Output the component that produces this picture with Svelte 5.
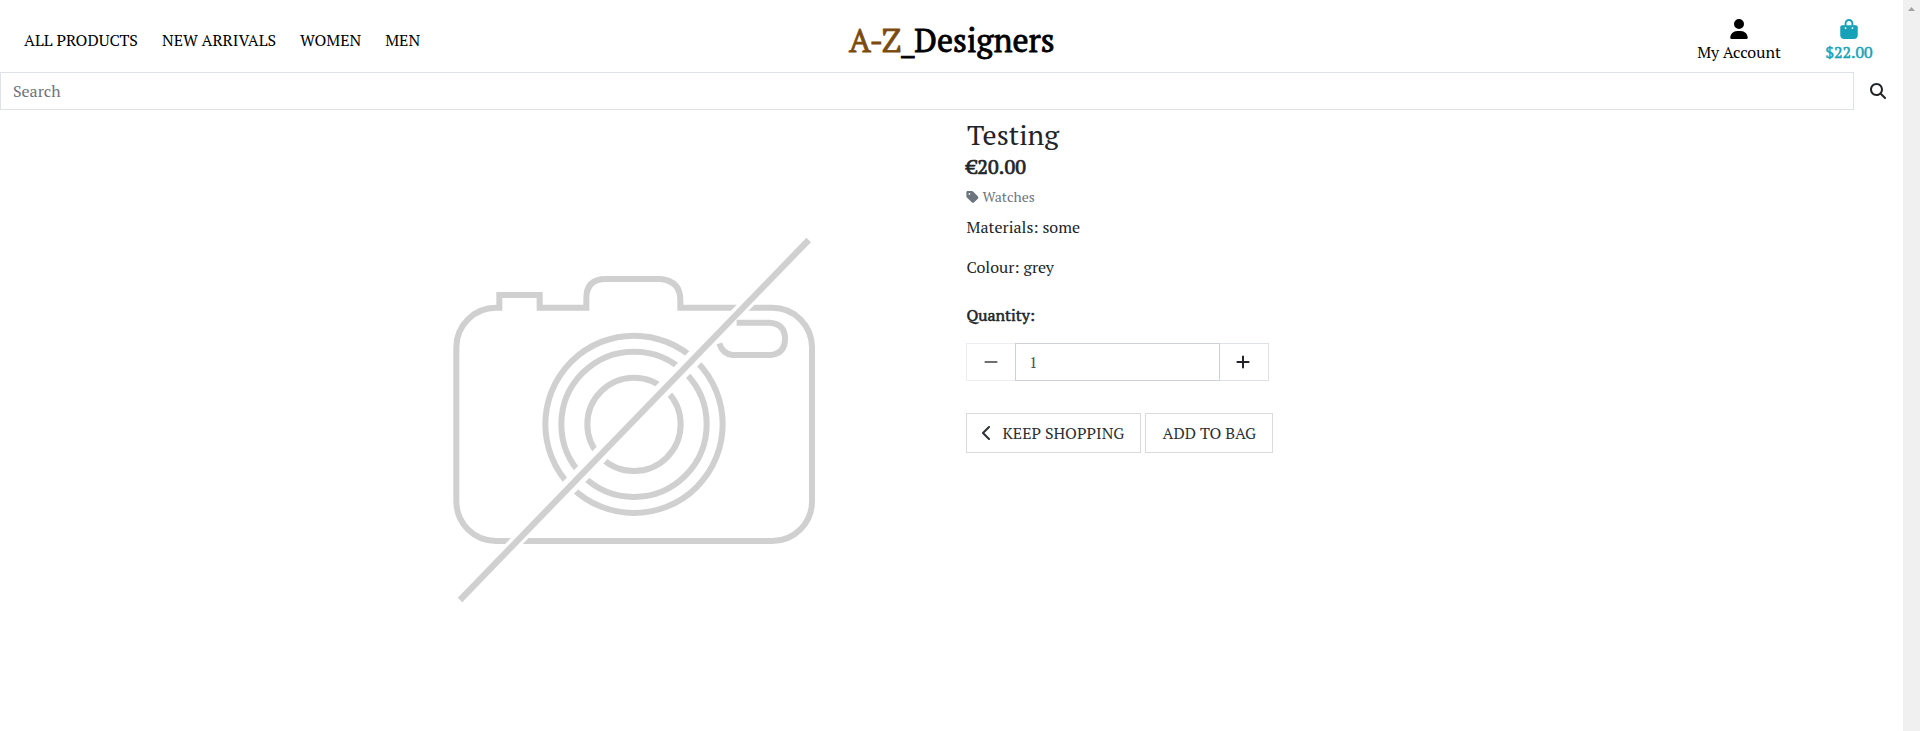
<script>
  const links = ['ALL PRODUCTS', 'NEW ARRIVALS', 'WOMEN', 'MEN'];
  let quantity = $state(1);
</script>

<div class="page">
  <div class="content">
    <header>
      <nav>
        {#each links as link}
          <a href="#top">{link}</a>
        {/each}
      </nav>
      <h1><span>A-Z</span>_Designers</h1>
      <div class="actions">
        <a href="#account" class="account">
          <svg width="18" height="20" viewBox="0 0 448 512"><path d="M224 256A128 128 0 1 0 224 0a128 128 0 1 0 0 256zm-45.7 48C79.8 304 0 383.8 0 482.3C0 498.7 13.3 512 29.7 512H418.3c16.4 0 29.7-13.3 29.7-29.7C448 383.8 368.2 304 269.7 304H178.3z" /></svg>
          <span>My Account</span>
        </a>
        <a href="#bag" class="bag">
          <svg width="18" height="20" viewBox="0 0 448 512"><path d="M160 112c0-35.3 28.7-64 64-64s64 28.7 64 64v48H160V112zm-48 48H48c-26.5 0-48 21.5-48 48V416c0 53 43 96 96 96H352c53 0 96-43 96-96V208c0-26.5-21.5-48-48-48H336V112C336 50.1 285.9 0 224 0S112 50.1 112 112v48zm24 48a24 24 0 1 1 0 48 24 24 0 1 1 0-48zm152 24a24 24 0 1 1 48 0 24 24 0 1 1 -48 0z" /></svg>
          <span>$22.00</span>
        </a>
      </div>
    </header>

    <form class="search" onsubmit={(e) => e.preventDefault()}>
      <input type="text" placeholder="Search" />
      <button type="submit" aria-label="Search">
        <svg width="16" height="16" viewBox="0 0 512 512"><path d="M416 208c0 45.9-14.9 88.3-40 122.7L502.6 457.4c12.5 12.5 12.5 32.8 0 45.3s-32.8 12.5-45.3 0L330.7 376c-34.4 25.2-76.8 40-122.7 40C93.1 416 0 322.9 0 208S93.1 0 208 0S416 93.1 416 208zM208 352a144 144 0 1 0 0-288 144 144 0 1 0 0 288z" /></svg>
      </button>
    </form>

    <main>
      <svg class="photo" width="400" height="400" viewBox="0 0 1200 1200">
        <mask id="body-gap" maskUnits="userSpaceOnUse" x="0" y="0" width="1200" height="1200">
          <rect width="1200" height="1200" fill="#fff" />
          <path d="M1132 63 92 1137" stroke="#000" stroke-width="38" />
        </mask>
        <mask id="lens-gap" maskUnits="userSpaceOnUse" x="0" y="0" width="1200" height="1200">
          <rect width="1200" height="1200" fill="#fff" />
          <path d="M1132 63 92 1137" stroke="#000" stroke-width="49" />
        </mask>
        <g fill="none" stroke="#d0d0d0" stroke-width="18">
          <path mask="url(#body-gap)" d="M208 272V225H329V263H469V235Q469 177 527 177H693Q751 184 751 240V263H1027A119 119 0 0 1 1146 382V844A119 119 0 0 1 1027 963H198A119 119 0 0 1 79 844V382A119 119 0 0 1 198 263H216" />
          <g mask="url(#lens-gap)">
            <circle cx="612" cy="613" r="266" />
            <circle cx="612" cy="613" r="218" />
            <circle cx="612" cy="613" r="140" />
          </g>
          <path d="M920 308H1020Q1065 312 1065 356Q1065 401 1020 405H908Q877 401 868 370" />
          <path d="M1136 60 90 1140" stroke-width="19" />
        </g>
      </svg>

      <section class="details">
        <h2>Testing</h2>
        <p class="price">€20.00</p>
        <p class="category">
          <svg width="13" height="14" viewBox="0 0 448 512"><path d="M0 80V229.5c0 17 6.7 33.3 18.7 45.3l176 176c25 25 65.5 25 90.5 0L418.7 317.3c25-25 25-65.5 0-90.5l-176-176c-12-12-28.3-18.7-45.3-18.7H48C21.5 32 0 53.5 0 80zm112 32a32 32 0 1 1 0 64 32 32 0 1 1 0-64z" /></svg>
          <span>Watches</span>
        </p>
        <p class="materials">Materials: some</p>
        <p class="colour">Colour: grey</p>
        <p class="label">Quantity:</p>
        <div class="quantity">
          <button class="minus" aria-label="Decrease" disabled={quantity < 2} onclick={() => quantity--}>
            <svg width="14" height="16" viewBox="0 0 14 16"><path d="M1.4 8H12.6" /></svg>
          </button>
          <input type="text" bind:value={quantity} />
          <button class="plus" aria-label="Increase" onclick={() => quantity++}>
            <svg width="14" height="16" viewBox="0 0 14 16"><path d="M1.4 8H12.6M7 2.4V13.6" /></svg>
          </button>
        </div>
        <div class="buttons">
          <button class="keep">
            <svg width="10" height="16" viewBox="0 0 320 512"><path d="M9.4 233.4c-12.5 12.5-12.5 32.8 0 45.3l192 192c12.5 12.5 32.8 12.5 45.3 0s12.5-32.8 0-45.3L77.3 256 246.6 86.6c12.5-12.5 12.5-32.8 0-45.3s-32.8-12.5-45.3 0l-192 192z" /></svg>
            <span>KEEP SHOPPING</span>
          </button>
          <button class="add">ADD TO BAG</button>
        </div>
      </section>
    </main>
  </div>
  <div class="scrollbar"><svg width="7" height="4" viewBox="0 0 7 4"><path d="M3.5 0 7 4H0z" /></svg></div>
</div>

<style>
  :global(body) { margin: 0; background: #fff; }
  .page, .page * { box-sizing: border-box; }
  .page {
    display: flex;
    height: 731px;
    overflow: hidden;
    font: 16px/24px "PT Serif", "Liberation Serif", serif;
    color: #212529;
  }
  .content { width: 1903px; }
  svg { display: block; flex: none; fill: currentColor; }
  h1, h2, p { margin: 0; font-weight: 400; white-space: nowrap; }
  a { color: #000; text-decoration: none; white-space: nowrap; }
  button, input { font: inherit; color: inherit; background: #fff; border-radius: 0; margin: 0; outline: 0; }
  button { display: flex; align-items: center; padding: 0; white-space: nowrap; }

  header { display: flex; height: 72px; }
  nav { display: flex; gap: 24px; width: 848px; padding: 28px 0 0 24px; }
  h1 {
    width: 848px;
    padding: 20px 0 0 1px;
    font-size: 32px;
    line-height: 40px;
    color: #000;
    -webkit-text-stroke: 0.8px;
  }
  h1 span { color: #7b4a0c; }
  .actions { display: flex; padding-top: 18.5px; gap: 43px; }
  .actions a { display: flex; flex-direction: column; align-items: center; }
  .actions span { margin-top: 1.5px; }
  .account { width: 86px; }
  .actions .bag { width: 48px; color: #17a2b8; -webkit-text-stroke: 0.5px; }

  .search { display: flex; height: 38px; }
  .search input { width: 1854px; padding: 0 12px; border: 1px solid #dee2e6; }
  .search input::placeholder { color: #6c757d; opacity: 1; }
  .search button { border: 0; padding-left: 16px; }

  main { display: flex; padding-left: 430px; }
  .photo { margin-top: 110px; filter: blur(0.5px); }
  .details { margin-left: 136px; padding-top: 7px; }
  h2 { padding-left: 1px; font-size: 28px; line-height: 36px; }
  .price { margin-top: 2px; font-size: 20px; line-height: 24px; padding-left: 0.5px; letter-spacing: 0.1px; -webkit-text-stroke: 0.7px; }
  .category { display: flex; align-items: center; gap: 3.5px; margin-top: 6px; height: 24px; font-size: 14px; color: #6c757d; }
  .materials { margin-top: 6px; padding-left: 0.6px; }
  .colour { margin-top: 16px; padding-left: 0.6px; }
  .label { margin-top: 24px; padding-left: 0.5px; -webkit-text-stroke: 0.5px; }
  .quantity { display: flex; margin-top: 16px; height: 38px; }
  .quantity button { justify-content: center; border: 1px solid #dee2e6; }
  .quantity svg { fill: none; stroke: currentColor; stroke-width: 2; stroke-linecap: round; }
  .quantity .minus { width: 49px; border-color: #ebedf0; border-right: 0; color: #6c7073; }
  .quantity input { width: 205px; padding: 0 13px; border: 1px solid #ced0da; color: #4d5359; }
  .quantity .plus { border-left: 0; width: 49px; padding-right: 2px; }
  .buttons { display: flex; gap: 4px; margin-top: 32px; }
  .buttons button { height: 40px; border: 1px solid #d9dadb; color: #2d3034; }
  .buttons .keep { width: 175px; padding-left: 14.5px; gap: 11px; }
  .buttons .add { width: 128px; padding-left: 16.5px; }

  .scrollbar { width: 17px; padding: 7px 0 0 5px; background: #f0f0f0; color: #a3a3a3; }
</style>
